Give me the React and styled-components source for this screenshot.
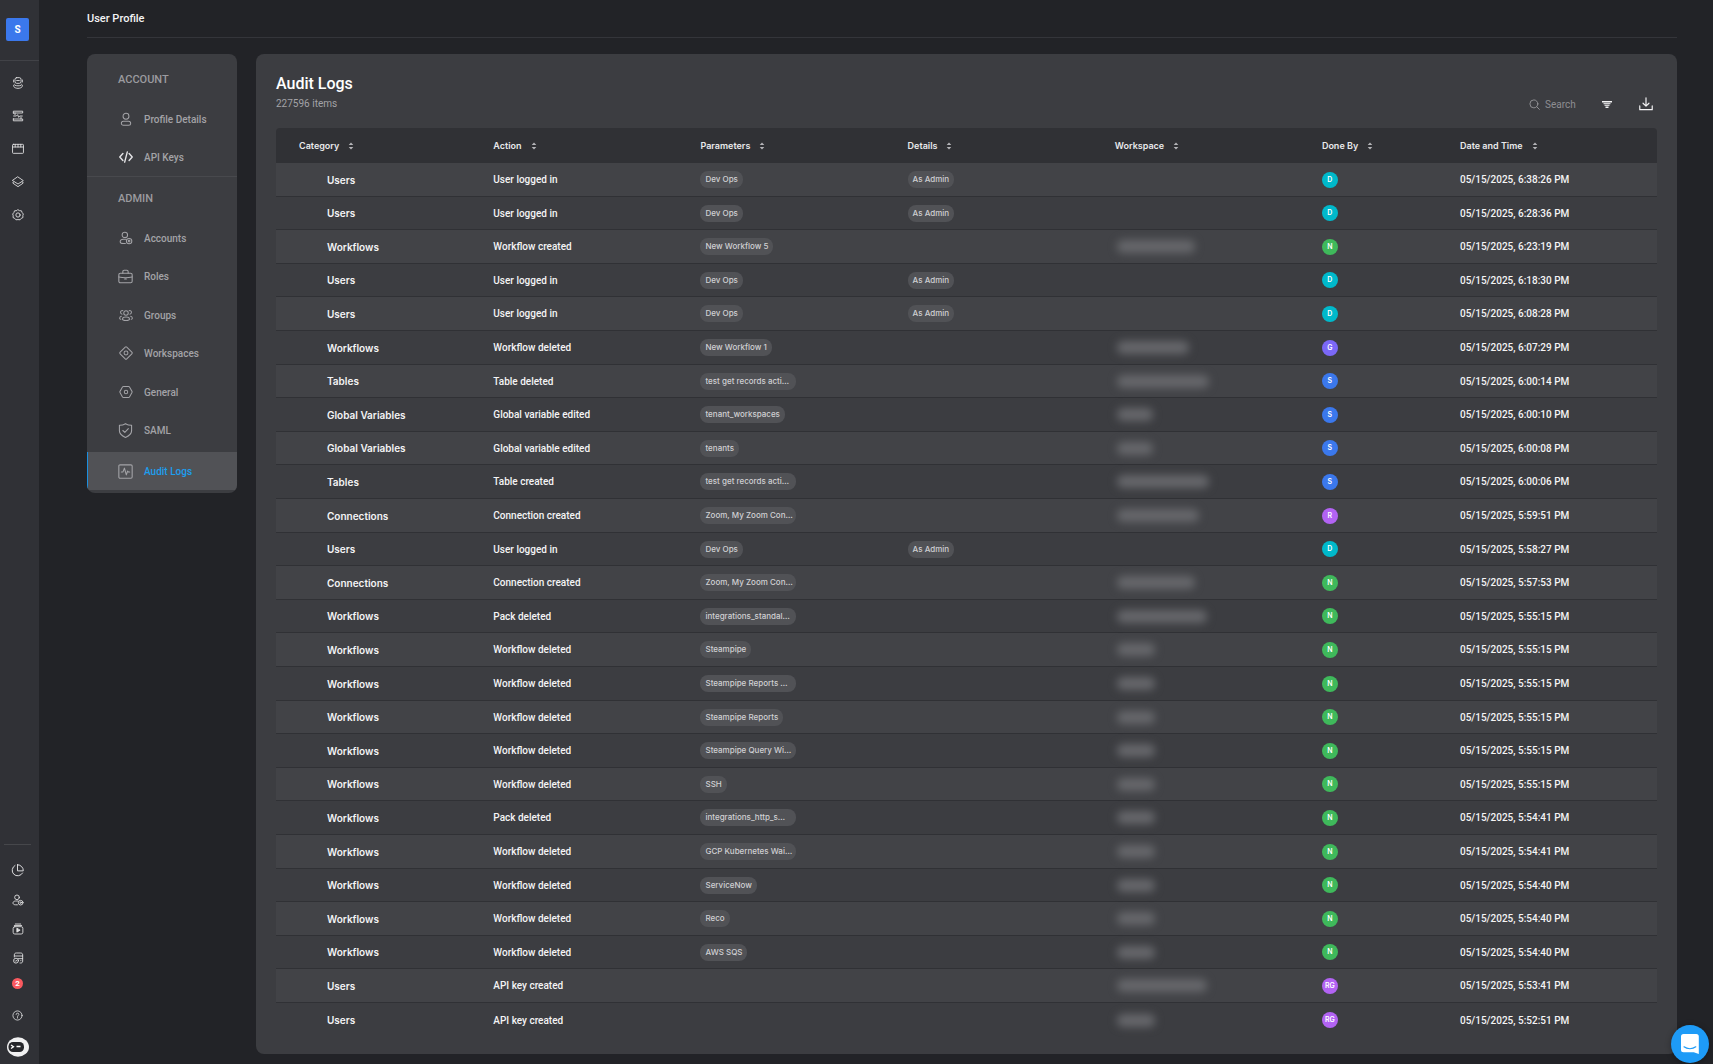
import React from 'react';
import styled, { createGlobalStyle } from 'styled-components';

const GlobalStyle = createGlobalStyle`
  * {
    box-sizing: border-box;
  }
  body {
    margin: 0;
    background: #222327;
    color: #f4f4f5;
    font-family: Roboto, sans-serif;
  }
  button,
  input {
    font-family: inherit;
    border: none;
    background: none;
    padding: 0;
    margin: 0;
  }
  button {
    cursor: pointer;
  }
`;

const icons = {
  robot: (
    <>
      <rect x="4.500" y="1" width="9" height="8.500" rx="2.500" />
      <path d="M7 5.300h4M2.500 4.500v3M15.500 4.500v3" />
      <path d="M3.500 11C2 12 2 13.500 3 14.800c1.300 1.500 3.500 2.200 6 2.200s4.700-.7 6-2.200c1-1.300 1-2.800-.5-3.800M4.500 12.500c2.800 1 6.200 1 9 0" />
    </>
  ),
  flow: (
    <>
      <path d="M2 4.500V1.800h14v2.700H2zM4.500 4.500v2.800M2 13.500v2.700h14v-2.700H2zM13.500 13.500v-2.800" />
      <path d="M2.500 9h4l2-2 1.500 4 1.500-2h4" />
    </>
  ),
  window: (
    <>
      <rect x="0.8" y="2" width="16.4" height="13.5" rx="1.2" />
      <path d="M1 6h16M4.800 2v4M9 2v4M13.200 2v4" />
    </>
  ),
  layers: (
    <>
      <path d="M9 1.500 17 7 9 12 1 7z" />
      <path d="M2.500 9 1 10.500 9 16l8-5.500L15.500 9" />
    </>
  ),
  gear: (
    <>
      <circle cx="9" cy="9" r="3.2" />
      <path d="M9 1.200l2.300 1.300 2.900.2 1 2.700 1.800 2.100-.8 2.500.3 2.800-2.600 1.200-1.800 2.200-3.100-.300-3.100.3-1.800-2.200-2.600-1.200.3-2.800L1 7.500l1.800-2.100 1-2.700 2.900-.2z" />
    </>
  ),
  pie: (
    <>
      <path d="M5.500 2A7.700 7.700 0 1 0 16 12.500" />
      <path d="M9 1v8.500h8A8 8 0 0 0 9 1z" />
    </>
  ),
  userCog: (
    <>
      <circle cx="7.500" cy="5" r="3.500" />
      <path d="M9 10.500H5.500c-2.500 0-4 1.200-4 3s1.500 2.700 4 2.700h2.700" />
      <circle cx="13" cy="13" r="3.500" />
      <circle cx="13" cy="13" r="1.100" />
    </>
  ),
  play: (
    <>
      <path d="M5 1.500h8M3.500 3.700h11" />
      <rect x="1.700" y="5.500" width="14.600" height="11" rx="2.500" />
      <path d="M7.300 8.300v5.400l4.400-2.700z" fill="currentColor" />
    </>
  ),
  database: (
    <>
      <path d="M3.500 7.500V4.500c0-2 1-3 3-3h6.500c2 0 3 1 3 3v9c0 2-1 3-3 3h-1" />
      <path d="M4 6h12M9 10h7M13 13h.5" />
      <circle cx="6" cy="13" r="3.700" />
      <path d="M4.700 13l1 1 1.800-1.800" />
    </>
  ),
  help: (
    <>
      <circle cx="9" cy="9" r="7.500" />
      <path d="M6.800 7.300C6.800 6 7.700 5.200 9 5.200s2.200.8 2.200 2c0 1.600-2.200 1.700-2.200 3.300M9 12.300v.9" />
    </>
  ),
  user: (
    <>
      <circle cx="9" cy="5.500" r="3.800" />
      <rect x="3" y="11.800" width="12" height="5.200" rx="2.600" />
    </>
  ),
  code: (
    <path strokeWidth="1.800" d="M5 4.500 1 9l4 4.500M13 4.500 17 9l-4 4.500M10.700 2.500 7.300 15.500" />
  ),
  briefcase: (
    <>
      <rect x="1" y="5" width="16" height="11.500" rx="1.800" />
      <path d="M5.800 5V3.200c0-1 .6-1.700 1.600-1.700h3.200c1 0 1.600.7 1.600 1.700V5M1 9.500c5 1.200 11 1.200 16 0M8 12h2" />
    </>
  ),
  group: (
    <>
      <circle cx="9" cy="6.500" r="2.900" />
      <path d="M9 11.500c-3 0-4.500.9-4.500 2.500s1.500 2 4.500 2 4.500-.4 4.500-2-1.500-2.500-4.500-2.500z" />
      <path d="M5 3.500c-1.600-.5-3 .5-3 2 0 1.300.8 2.200 2 2.400M13 3.500c1.600-.5 3 .5 3 2 0 1.300-.8 2.200-2 2.400M3 10.700c-1.500.5-2.200 1.300-2.200 2.400 0 .8.500 1.300 1.500 1.500M15 10.700c1.500.5 2.200 1.300 2.200 2.400 0 .8-.5 1.300-1.500 1.500" />
    </>
  ),
  diamond: (
    <>
      <path d="M8 1.500c.6-.6 1.400-.6 2 0L16.500 8c.6.600.6 1.400 0 2L10 16.500c-.6.600-1.400.6-2 0L1.500 10c-.6-.6-.6-1.400 0-2z" />
      <circle cx="9" cy="9" r="2.500" />
    </>
  ),
  hexagon: (
    <>
      <path d="M5.800 2h6.400c.6 0 1 .2 1.300.7l3.200 5.500c.3.500.3 1 0 1.500l-3.200 5.600c-.3.500-.7.700-1.300.7H5.800c-.6 0-1-.2-1.300-.7L1.300 9.700c-.3-.5-.3-1 0-1.500l3.200-5.500c.3-.5.7-.7 1.300-.7z" />
      <circle cx="9" cy="9" r="2.200" />
    </>
  ),
  shield: (
    <>
      <path d="M9 .8c2.200 1.300 4.600 1.900 7.300 2v6.500c0 3.800-2.800 6-7.300 8-4.500-2-7.300-4.200-7.300-8V2.800C4.400 2.700 6.800 2.100 9 .8z" />
      <path d="M5.800 9l2.400 2.300 4.200-4.500" />
    </>
  ),
  activity: (
    <>
      <rect x="1" y="1" width="16" height="16" rx="1.500" />
      <path d="M4 9.500h2l1.700-4.500 2.300 8 1.500-4.500.8 1H14" />
    </>
  ),
  search: (
    <>
      <circle cx="8" cy="8" r="6.500" />
      <path d="M13 13l4 4" />
    </>
  ),
  download: <path strokeWidth="1.500" d="M9 1v10.500M5.200 8 9 11.700 12.800 8M1 11.500v4.800h16v-4.800" />,
};

const Icon = ({ name, size = 12 }) => (
  <svg
    width={size}
    height={size}
    viewBox="0 0 18 18"
    fill="none"
    stroke="currentColor"
    strokeWidth="1.3"
    strokeLinejoin="round"
    strokeLinecap="round"
    aria-hidden="true"
  >
    {icons[name]}
  </svg>
);

const SortIcon = () => (
  <svg width="6" height="8" viewBox="0 0 6 8" fill="#b4b4b8" aria-hidden="true">
    <path d="M3 0.500 5.300 3h-4.600zM3 7.500 5.300 5h-4.600z" />
  </svg>
);

const accountLinks = [
  { label: 'Profile Details', icon: 'user' },
  { label: 'API Keys', icon: 'code', bright: true },
];

const adminLinks = [
  { label: 'Accounts', icon: 'userCog' },
  { label: 'Roles', icon: 'briefcase', size: 15 },
  { label: 'Groups', icon: 'group' },
  { label: 'Workspaces', icon: 'diamond' },
  { label: 'General', icon: 'hexagon' },
  { label: 'SAML', icon: 'shield', size: 15 },
];

const columns = [
  { label: 'Category', width: 14 },
  { label: 'Action', width: 15 },
  { label: 'Parameters', width: 15 },
  { label: 'Details', width: 15 },
  { label: 'Workspace', width: 15 },
  { label: 'Done By', width: 10 },
  { label: 'Date and Time', width: 16 },
];

const userColors = {
  D: '#00b9cb',
  N: '#3fb95b',
  G: '#7b68f7',
  S: '#3b78ec',
  R: '#b263f3',
  RG: '#b263f3',
};

// category, action, parameter, details, width of the hidden workspace, user, time
const logs = [
  ['Users', 'User logged in', 'Dev Ops', 'As Admin', 0, 'D', '6:38:26'],
  ['Users', 'User logged in', 'Dev Ops', 'As Admin', 0, 'D', '6:28:36'],
  ['Workflows', 'Workflow created', 'New Workflow 5', '', 78, 'N', '6:23:19'],
  ['Users', 'User logged in', 'Dev Ops', 'As Admin', 0, 'D', '6:18:30'],
  ['Users', 'User logged in', 'Dev Ops', 'As Admin', 0, 'D', '6:08:28'],
  ['Workflows', 'Workflow deleted', 'New Workflow 1', '', 72, 'G', '6:07:29'],
  ['Tables', 'Table deleted', 'test get records acti…', '', 92, 'S', '6:00:14'],
  ['Global Variables', 'Global variable edited', 'tenant_workspaces', '', 36, 'S', '6:00:10'],
  ['Global Variables', 'Global variable edited', 'tenants', '', 36, 'S', '6:00:08'],
  ['Tables', 'Table created', 'test get records acti…', '', 92, 'S', '6:00:06'],
  ['Connections', 'Connection created', 'Zoom, My Zoom Con…', '', 82, 'R', '5:59:51'],
  ['Users', 'User logged in', 'Dev Ops', 'As Admin', 0, 'D', '5:58:27'],
  ['Connections', 'Connection created', 'Zoom, My Zoom Con…', '', 78, 'N', '5:57:53'],
  ['Workflows', 'Pack deleted', 'integrations_standal…', '', 90, 'N', '5:55:15'],
  ['Workflows', 'Workflow deleted', 'Steampipe', '', 38, 'N', '5:55:15'],
  ['Workflows', 'Workflow deleted', 'Steampipe Reports …', '', 38, 'N', '5:55:15'],
  ['Workflows', 'Workflow deleted', 'Steampipe Reports', '', 38, 'N', '5:55:15'],
  ['Workflows', 'Workflow deleted', 'Steampipe Query Wi…', '', 38, 'N', '5:55:15'],
  ['Workflows', 'Workflow deleted', 'SSH', '', 38, 'N', '5:55:15'],
  ['Workflows', 'Pack deleted', 'integrations_http_s…', '', 38, 'N', '5:54:41'],
  ['Workflows', 'Workflow deleted', 'GCP Kubernetes Wai…', '', 38, 'N', '5:54:41'],
  ['Workflows', 'Workflow deleted', 'ServiceNow', '', 38, 'N', '5:54:40'],
  ['Workflows', 'Workflow deleted', 'Reco', '', 38, 'N', '5:54:40'],
  ['Workflows', 'Workflow deleted', 'AWS SQS', '', 38, 'N', '5:54:40'],
  ['Users', 'API key created', '', '', 90, 'RG', '5:53:41'],
  ['Users', 'API key created', '', '', 38, 'RG', '5:52:51'],
];

const App = () => (
  <>
    <GlobalStyle />
    <Page>
      <Rail aria-label="Main">
        <RailTop>
          <Workspace type="button">S</Workspace>
        </RailTop>
        <RailGroup>
          {['robot', 'flow', 'window', 'layers', 'gear'].map((name) => (
            <RailButton key={name} type="button" aria-label={name} $height={33}>
              <Icon name={name} />
            </RailButton>
          ))}
        </RailGroup>
        <RailFooter>
          {['pie', 'userCog', 'play', 'database'].map((name) => (
            <RailButton key={name} type="button" aria-label={name} $height={29}>
              <Icon name={name} size={name === 'pie' ? 13 : 12} />
            </RailButton>
          ))}
          <Notifications type="button" $height={27}>
            <Count>2</Count>
          </Notifications>
          <RailButton type="button" aria-label="Help" $height={32}>
            <Icon name="help" size={11} />
          </RailButton>
          <RailButton type="button" aria-label="Assistant" $height={32}>
            <svg width="22" height="20" viewBox="0 0 22 20" aria-hidden="true">
              <ellipse cx="11" cy="10" rx="11" ry="9.700" fill="#f1f1f2" />
              <rect x="1.500" y="5" width="15.500" height="10" rx="4.500" fill="#26272b" />
              <path d="M4 8l2.500 1.700L4 11.500M9.500 9.500h4" stroke="#fff" strokeWidth="1.300" fill="none" />
            </svg>
          </RailButton>
        </RailFooter>
      </Rail>

      <Main>
        <TopBar>User Profile</TopBar>
        <Columns>
          <SideCard aria-label="Profile">
            <SideTitle $top={18} $bottom={13}>ACCOUNT</SideTitle>
            <SideList $divided>
              {accountLinks.map((link) => (
                <SideItem key={link.label} link={link} />
              ))}
            </SideList>
            <SideTitle $top={14} $bottom={13}>ADMIN</SideTitle>
            <SideList>
              {adminLinks.map((link) => (
                <SideItem key={link.label} link={link} />
              ))}
            </SideList>
            <SideLink href="#audit-logs" $active aria-current="page">
              <SideIcon>
                <Icon name="activity" size={15} />
              </SideIcon>
              Audit Logs
            </SideLink>
          </SideCard>

          <Card>
            <CardHeader>
              <div>
                <Title>Audit Logs</Title>
                <Total>227596 items</Total>
              </div>
              <Tools>
                <SearchBox>
                  <Icon name="search" size={11} />
                  <input type="text" placeholder="Search" aria-label="Search" />
                </SearchBox>
                <ToolButton type="button" aria-label="Filter">
                  <svg width="10" height="7" viewBox="0 0 10 7" fill="currentColor" aria-hidden="true">
                    <path d="M0 0h10v1.500H0zM3.500 5.500h3V7h-3z" />
                    <path d="M1.500 2h7v1.200h-7zM2.500 3.700h5v1.200h-5z" opacity="0.8" />
                  </svg>
                </ToolButton>
                <ToolButton type="button" aria-label="Download">
                  <Icon name="download" size={14} />
                </ToolButton>
              </Tools>
            </CardHeader>
            <Table>
              <colgroup>
                {columns.map((col) => (
                  <Col key={col.label} $width={col.width} />
                ))}
              </colgroup>
              <thead>
                <tr>
                  {columns.map((col) => (
                    <th key={col.label} scope="col">
                      <SortButton type="button">
                        {col.label}
                        <SortIcon />
                      </SortButton>
                    </th>
                  ))}
                </tr>
              </thead>
              <tbody>
                {logs.map(([category, action, param, detail, hidden, user, time], i) => (
                  <tr key={i}>
                    <Category>{category}</Category>
                    <td>{action}</td>
                    <td>{param && <Tag $full={param.endsWith('…')}>{param}</Tag>}</td>
                    <td>{detail && <Tag>{detail}</Tag>}</td>
                    <td>{hidden > 0 && <Redacted $width={hidden} />}</td>
                    <td>
                      <Avatar $color={userColors[user]}>{user}</Avatar>
                    </td>
                    <td>05/15/2025, {time} PM</td>
                  </tr>
                ))}
              </tbody>
            </Table>
          </Card>
        </Columns>
      </Main>

      <ChatButton type="button" aria-label="Open chat">
        <svg width="18" height="20" viewBox="0 0 18 20" aria-hidden="true">
          <path d="M2.500 0h12.800A2.500 2.500 0 0 1 17.800 2.500V20l-5-1.700H2.500A2.500 2.500 0 0 1 0 15.800V2.500A2.500 2.500 0 0 1 2.500 0z" fill="#fff" />
          <path d="M3 12.800c3.300 2.600 8.500 2.600 11.800 0" stroke="#1e9bf7" strokeWidth="1.200" strokeLinecap="round" fill="none" />
        </svg>
      </ChatButton>
    </Page>
  </>
);

const SideItem = ({ link }) => (
  <li>
    <SideLink href={`#${link.label}`}>
      <SideIcon $bright={link.bright}>
        <Icon name={link.icon} size={link.size || 14} />
      </SideIcon>
      {link.label}
    </SideLink>
  </li>
);

export default App;

const Page = styled.div`
  display: flex;
  min-height: 100vh;
`;

const Rail = styled.nav`
  display: flex;
  flex-direction: column;
  flex: none;
  width: 39px;
  padding: 0 4px 1px 0;
  background: #303136;
`;

const RailTop = styled.div`
  display: flex;
  justify-content: center;
  height: 61px;
  margin-right: -4px;
  padding: 18px 4px 0 0;
  border-bottom: 1px solid #414247;
`;

const Workspace = styled.button`
  width: 23px;
  height: 23px;
  border-radius: 2px;
  background: #3b78ec;
  color: #fff;
  font-size: 10px;
  font-weight: 700;
`;

const RailGroup = styled.div`
  padding-top: 5px;
`;

const RailFooter = styled.div`
  margin: auto 4px 0;
  padding-top: 11px;
  border-top: 1px solid #46474b;
`;

const RailButton = styled.button`
  display: flex;
  align-items: center;
  justify-content: center;
  width: 100%;
  height: ${(props) => props.$height}px;
  color: #e4e4e6;
`;

const Notifications = styled(RailButton)`
  padding-bottom: 4px;
`;

const Count = styled.span`
  width: 11px;
  height: 11px;
  border-radius: 50%;
  background: #f9595f;
  color: #fff;
  font-size: 8px;
  font-weight: 700;
  line-height: 11px;
`;

const Main = styled.main`
  flex: 1;
  min-width: 0;
  padding: 0 36px 10px 48px;
`;

const TopBar = styled.header`
  height: 38px;
  padding-top: 10px;
  border-bottom: 1px solid #34353a;
  font-size: 11px;
  font-weight: 500;
  line-height: 18px;
`;

const Columns = styled.div`
  display: flex;
  align-items: flex-start;
  gap: 19px;
  padding-top: 16px;
`;

const SideCard = styled.nav`
  flex: none;
  width: 150px;
  padding-bottom: 3px;
  border-radius: 8px;
  background: #3c3d41;
  overflow: hidden;
`;

const SideTitle = styled.h2`
  margin: 0;
  padding: ${(props) => props.$top}px 0 ${(props) => props.$bottom}px 31px;
  color: #9b9b9f;
  font-size: 11px;
  font-weight: 500;
  line-height: 15px;
`;

const SideList = styled.ul`
  margin: 0;
  padding: ${(props) => (props.$divided ? '0' : '0 0 2px')};
  list-style: none;
  border-bottom: ${(props) => (props.$divided ? '1px solid #48494d' : 'none')};

  li:nth-child(even) {
    padding-bottom: ${(props) => (props.$divided ? '0' : '1px')};
  }
`;

const SideLink = styled.a`
  display: flex;
  align-items: center;
  height: 38px;
  padding-left: ${(props) => (props.$active ? '30px' : '31px')};
  border-left: ${(props) => (props.$active ? '1px solid #1b8fe0' : 'none')};
  background: ${(props) => (props.$active ? '#515256' : 'transparent')};
  color: ${(props) => (props.$active ? '#1c9eee' : '#a3a3a7')};
  font-size: 10px;
  font-weight: 500;
  text-decoration: none;
`;

const SideIcon = styled.span`
  display: flex;
  justify-content: center;
  width: 15px;
  margin-right: 11px;
  color: ${(props) => (props.$bright ? '#e4e4e6' : '#a3a3a7')};
`;

const Card = styled.section`
  flex: 1;
  min-width: 0;
  padding: 18px 20px 17px;
  border-radius: 8px;
  background: #3c3d41;
`;

const CardHeader = styled.div`
  display: flex;
  justify-content: space-between;
  align-items: flex-end;
  height: 56px;
  padding-bottom: 15px;
`;

const Title = styled.h1`
  margin: 0;
  color: #fff;
  font-size: 16px;
  font-weight: 500;
  line-height: 22px;
`;

const Total = styled.p`
  margin: 0;
  color: #a3a3a7;
  font-size: 10px;
  line-height: 18px;
`;

const Tools = styled.div`
  display: flex;
  align-items: center;
  gap: 21px;
  height: 18px;
  padding-right: 2px;
`;

const SearchBox = styled.label`
  display: flex;
  align-items: center;
  gap: 5px;
  color: #a3a3a7;

  input {
    width: 32px;
    outline: none;
    color: inherit;
    font-size: 10px;
  }
  input::placeholder {
    color: #8e8e92;
  }
`;

const ToolButton = styled.button`
  display: flex;
  align-items: center;
  justify-content: center;
  width: 18px;
  height: 18px;
  color: #f4f4f5;
`;

const Table = styled.table`
  width: 100%;
  table-layout: fixed;
  border-collapse: separate;
  border-spacing: 0;
  font-size: 10px;

  th,
  td {
    padding: 0 0 0 24px;
    text-align: left;
    white-space: nowrap;
  }
  th {
    height: 35px;
    background: #303135;
  }
  th:first-child {
    padding-left: 23px;
    border-top-left-radius: 4px;
  }
  th:last-child {
    border-top-right-radius: 4px;
  }
  td {
    height: 33px;
    border-bottom: 1px solid #303135;
    font-weight: 500;
  }
  tr:nth-child(5n) td,
  tr:nth-child(5n + 1) td,
  tr:nth-child(5n + 3) td {
    height: 34px;
  }
  tbody tr:nth-child(odd) {
    background: #424347;
  }
  tbody tr:last-child td {
    border-bottom: none;
  }
`;

const Col = styled.col`
  width: ${(props) => props.$width}%;
`;

const SortButton = styled.button`
  display: flex;
  align-items: center;
  gap: 9px;
  color: #e9e9eb;
  font-family: Inter, sans-serif;
  font-size: 9px;
  font-weight: 600;
`;

const Category = styled.td`
  && {
    padding-left: 51px;
    font-family: Inter, sans-serif;
    font-weight: 600;
  }
`;

const Tag = styled.span`
  display: block;
  width: ${(props) => (props.$full ? '96px' : 'fit-content')};
  height: 17px;
  padding: 0 5px;
  border-radius: 8px;
  background: #515256;
  color: #d0d0d3;
  font-family: Inter, sans-serif;
  font-size: 8px;
  line-height: 17px;
`;

const Redacted = styled.span`
  display: block;
  width: ${(props) => props.$width}px;
  height: 13px;
  margin-left: 2px;
  border-radius: 6px;
  background: #66676b;
  filter: blur(4px);
`;

const Avatar = styled.span`
  display: block;
  width: 16px;
  height: 16px;
  border-radius: 50%;
  background: ${(props) => props.$color};
  color: #fff;
  font-family: Inter, sans-serif;
  font-size: 7px;
  font-weight: 600;
  line-height: 16px;
  text-align: center;
`;

const ChatButton = styled.button`
  position: fixed;
  right: 4px;
  bottom: 1px;
  display: flex;
  align-items: center;
  justify-content: center;
  width: 38px;
  height: 38px;
  border-radius: 50%;
  background: #1e9bf7;
  box-shadow: 0 1px 6px rgba(0, 0, 0, 0.3);
`;
